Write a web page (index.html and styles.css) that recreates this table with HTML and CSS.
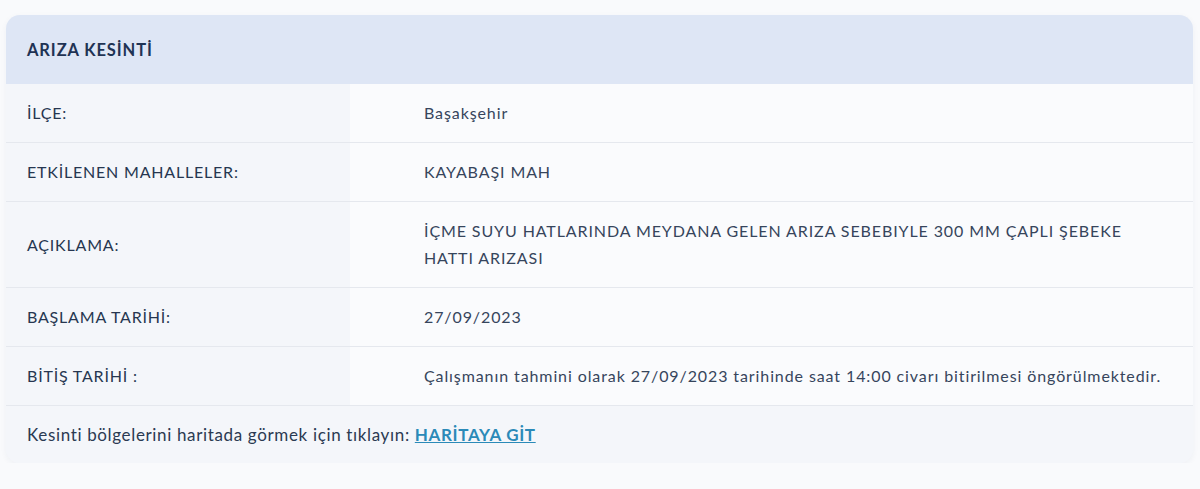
FILE: index.html
```html
<!DOCTYPE html>
<html lang="tr">
<head>
<meta charset="utf-8">
<title>Arıza Kesinti</title>
<link rel="stylesheet" href="styles.css">
</head>
<body>
<div class="card">
  <div class="card-head">ARIZA KESİNTİ</div>
  <div class="grid">
    <div class="label">İLÇE:</div>
    <div class="value">Başakşehir</div>
    <div class="label">ETKİLENEN MAHALLELER:</div>
    <div class="value">KAYABAŞI MAH</div>
    <div class="label">AÇIKLAMA:</div>
    <div class="value">İÇME SUYU HATLARINDA MEYDANA GELEN ARIZA SEBEBIYLE 300 MM ÇAPLI ŞEBEKE<br>HATTI ARIZASI</div>
    <div class="label">BAŞLAMA TARİHİ:</div>
    <div class="value">27/09/2023</div>
    <div class="label">BİTİŞ TARİHİ :</div>
    <div class="value">Çalışmanın tahmini olarak 27/09/2023 tarihinde saat 14:00 civarı bitirilmesi öngörülmektedir.</div>
  </div>
  <div class="card-foot">Kesinti bölgelerini haritada görmek için tıklayın: <a class="map-link" href="#">HARİTAYA GİT</a></div>
</div>
</body>
</html>
```

FILE: styles.css
```css
html, body {
  margin: 0;
  padding: 0;
}
body {
  background: #f9fafc;
  font-family: "Lato", "Liberation Sans", sans-serif;
  color: #2b3a52;
  padding: 15px 7px 0 6px;
}
.card {
  border-radius: 14px;
  overflow: hidden;
  background: #f4f6fa;
  box-shadow: 0 2px 6px rgba(40, 60, 100, 0.05);
}
.card-head {
  background: #dee6f5;
  height: 69px;
  display: flex;
  align-items: center;
  padding-left: 21px;
  font-weight: 700;
  font-size: 16.5px;
  letter-spacing: 0.9px;
  color: #1f3354;
}
.grid {
  display: grid;
  grid-template-columns: 344px 1fr;
}
.label, .value {
  padding: 15px 0 16px;
  line-height: 27px;
  font-size: 16px;
  letter-spacing: 0.8px;
  border-bottom: 1px solid #e5e8ee;
  display: flex;
  align-items: center;
}
.label {
  background: #f4f6fa;
  padding-left: 21px;
  color: #263650;
}
.value {
  background: #fafbfd;
  padding-left: 74px;
  letter-spacing: 0.9px;
  color: #36455c;
}
.card-foot {
  background: #f4f6fa;
  height: 57px;
  display: flex;
  align-items: center;
  padding-left: 21px;
  font-size: 17px;
  letter-spacing: 0.65px;
  color: #2b3a52;
  white-space: pre;
}
.map-link {
  color: #2b8ab8;
  font-weight: 700;
  text-decoration: underline;
}
```
